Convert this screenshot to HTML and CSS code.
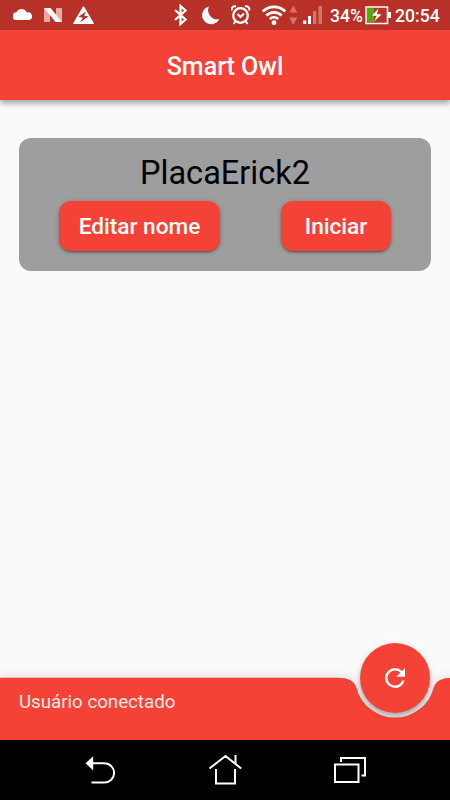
FILE: index.html
```html
<!DOCTYPE html>
<html lang="pt-BR">
<head>
<meta charset="utf-8">
<title>Smart Owl</title>
<link rel="stylesheet" href="styles.css">
</head>
<body>
<div class="app">
  <div class="status">
    <div class="status-left">
      <svg width="20" height="30" viewBox="13 0 20 30"><path fill="#fff" d="M16.300 20a3.900 3.900 0 0 1 .2-7.800C18.500 8 24.500 7.800 27 12.400a3.900 3.900 0 0 1 2.200 7.600z"/></svg>
      <svg width="20" height="30" viewBox="43 0 20 30"><path fill="#e8a9a4" d="M44 8.500l6 3V22h-6zM62 8v14l-6-3V8z"/><path fill="#fff" d="M44 8h6.500L62 22h-6.500z"/></svg>
      <svg width="22" height="30" viewBox="72 0 22 30"><path fill="#fff" stroke="#fff" stroke-linejoin="round" d="M82.500 6.500L92.500 23.500h-20z"/><path fill="#b73128" d="M85 11.500l-7.500 5.200 4.300 1.100-3 4.700 8.700-5.900-4.400-1z"/></svg>
    </div>
    <div class="status-right">
      <svg width="14" height="30" viewBox="174 0 14 30"><path fill="none" stroke="#fff" stroke-width="2.300" d="M175 10l10.500 9.500-5 4.500V6l5 4.500L175 20"/></svg>
      <svg width="19" height="30" viewBox="202 0 19 30"><path fill="#fff" d="M209 6.500a9 9 0 0 0 10.300 12.500 9 9 0 1 1-10.300-12.500z"/></svg>
      <svg width="20" height="30" viewBox="231 0 20 30"><g fill="none" stroke="#fff" stroke-width="2.300"><circle cx="240.500" cy="15.500" r="7.300"/><path d="M232 10.500a3 3 0 0 1 4-4M249 10.500a3 3 0 0 0-4-4M235.500 21l-2 3M245.500 21l2 3M237.500 14l3 3 3.500-3.500" stroke-width="2"/></g></svg>
      <svg width="24" height="30" viewBox="262 0 24 30"><g fill="none" stroke="#fff" stroke-width="2.600"><path d="M262.700 11.500a16 16 0 0 1 22.600 0M266.300 15.500a11 11 0 0 1 15.400 0M269.800 19a6 6 0 0 1 8.400 0"/></g><circle cx="274" cy="22.700" r="2.400" fill="#fff"/></svg>
      <svg width="9" height="30" viewBox="289 0 9 30"><path fill="#d7736c" d="M293.300 5.500l4 7h-8zM289.300 17.500h8l-4 7.500z"/></svg>
      <svg width="20" height="30" viewBox="303 0 20 30"><path fill="#fff" d="M303 20.500h3.300V24H303zM308 16h3v8h-3z"/><path fill="#d7736c" d="M313 11h3.300v13H313zM318.500 6h3.500v18h-3.500z"/></svg>
      <span class="percent">34%</span>
      <svg width="26" height="30" viewBox="365 0 26 30"><path fill="#53ad00" d="M367 8h7v14h-7z"/><path fill="none" stroke="#fff" stroke-width="1.600" d="M366 7h21.500v16.500H366z"/><path fill="#fff" d="M388 12h3v6h-3zM378.500 8.500L372 15.500l4.500.5-2.500 5.500 7.500-7-4.500-.5z"/></svg>
      <span class="time">20:54</span>
    </div>
  </div>
  <header class="header"><h1>Smart Owl</h1></header>
  <main class="content">
    <section class="card">
      <h2>PlacaErick2</h2>
      <div class="actions">
        <button class="btn btn-edit">Editar nome</button>
        <button class="btn btn-start">Iniciar</button>
      </div>
    </section>
  </main>
  <footer class="bottom">
    <svg class="bottom-shape" width="450" height="62" viewBox="0 678 450 62"><path fill="#f44336" d="M0 677.700H337C349 677.700 354 681 356.200 687.300A40 40 0 0 0 433.800 687.300C436 681 441 677.700 453 677.700V740H0z"/></svg>
    <span class="message">Usuário conectado</span>
    <button class="fab" aria-label="Atualizar">
      <svg width="30" height="30" viewBox="0 0 24 24"><path fill="#fff" d="M17.650 6.350A7.950 7.950 0 0 0 12 4a8 8 0 1 0 7.730 10h-2.080A6 6 0 1 1 12 6c1.660 0 3.140.69 4.220 1.780L13 11h7V4z"/></svg>
    </button>
  </footer>
  <nav class="nav">
    <svg width="32" height="60" viewBox="85 740 32 60"><path fill="none" stroke="#fff" stroke-width="2" d="M92 763.300h12.500a9.600 9.600 0 0 1 0 19.200H91.500"/><path fill="#fff" d="M85.500 763.300L93.200 756.200v14.200z"/></svg>
    <svg width="34" height="60" viewBox="208 740 34 60"><path fill="none" stroke="#fff" stroke-width="2" d="M209.500 768.500L225.500 756l15.700 12.500M235.500 755v9M216 769v14.500h19V769"/></svg>
    <svg width="34" height="60" viewBox="333 740 34 60"><path fill="none" stroke="#fff" stroke-width="2" d="M335 764.500h23.500V782H335zM341 762v-4h24v17.500h-3.500"/></svg>
  </nav>
</div>
</body>
</html>
```
FILE: styles.css
```css
* { box-sizing: border-box; }
body { margin: 0; font-family: Roboto, "Liberation Sans", sans-serif; }
svg { display: block; flex: none; }
button { border: 0; padding: 0; font-family: inherit; color: #fff; background: #f44336; }

.app {
  display: flex;
  flex-direction: column;
  width: 450px;
  height: 800px;
  overflow: hidden;
  background: #fafafa;
}

.status {
  position: relative;
  z-index: 1;
  display: flex;
  flex: none;
  justify-content: space-between;
  height: 30px;
  padding: 0 10px 0 13px;
  background: #b73128;
  color: #fff;
  font-size: 17.6px;
  font-weight: 500;
  line-height: 32px;
}
.status-left { display: flex; gap: 10px; }
.status-right { display: flex; width: 266px; }
.status-right svg:nth-of-type(1) { margin-right: 14px; }
.status-right svg:nth-of-type(2) { margin-right: 10px; }
.status-right svg:nth-of-type(3) { margin-right: 11px; }
.status-right svg:nth-of-type(4) { margin-right: 3px; }
.status-right svg:nth-of-type(5) { margin-right: 5px; }
.status-right svg:nth-of-type(6) { margin-right: 7px; }
.percent { width: 35px; }
.time { margin-left: 4px; }

.header {
  display: flex;
  align-items: center;
  justify-content: center;
  flex: none;
  height: 69.600px;
  background: #f44336;
  box-shadow: 0 2px 5px rgba(0, 0, 0, .2), 0 4px 6px rgba(0, 0, 0, .14), 0 1px 11px rgba(0, 0, 0, .12);
}
.header h1 {
  margin: 4px 0 0;
  color: #fff;
  font-size: 25px;
  font-weight: 500;
  line-height: 30px;
}

.content { flex: 1; padding: 38px 19px 0; }
.card {
  height: 133.400px;
  padding-top: 15.400px;
  border-radius: 12px;
  background: #9e9e9e;
}
.card h2 {
  margin: 0;
  color: #000;
  font-size: 32.500px;
  font-weight: 400;
  line-height: 40px;
  text-align: center;
}
.actions {
  display: flex;
  justify-content: space-between;
  margin-top: 8.400px;
  padding: 0 40px;
}
.btn {
  height: 50px;
  padding-top: 1px;
  border-radius: 12px;
  font-size: 22.600px;
  font-weight: 500;
  box-shadow: 0 3px 1px -2px rgba(0, 0, 0, .2), 0 2px 2px rgba(0, 0, 0, .14), 0 1px 5px rgba(0, 0, 0, .22);
}
.btn-edit { width: 161px; }
.btn-start { width: 110px; }

.bottom {
  position: relative;
  flex: none;
  height: 62px;
}
.bottom-shape {
  position: absolute;
  inset: 0;
  overflow: visible;
  filter: drop-shadow(0 -1px 5px rgba(0, 0, 0, .12));
}
.message {
  position: relative;
  display: block;
  padding: 12px 0 0 19px;
  color: #ffe9e7;
  font-size: 18.700px;
  line-height: 24px;
}
.fab {
  position: absolute;
  top: -35.500px;
  left: 360px;
  display: flex;
  align-items: center;
  justify-content: center;
  width: 70px;
  height: 70px;
  border-radius: 50%;
  box-shadow: 0 3px 4px rgba(0, 0, 0, .24), 0 2px 8px rgba(0, 0, 0, .1);
}

.nav {
  display: flex;
  flex: none;
  justify-content: space-between;
  height: 60px;
  padding: 0 83px 0 85px;
  background: #000;
}
```
